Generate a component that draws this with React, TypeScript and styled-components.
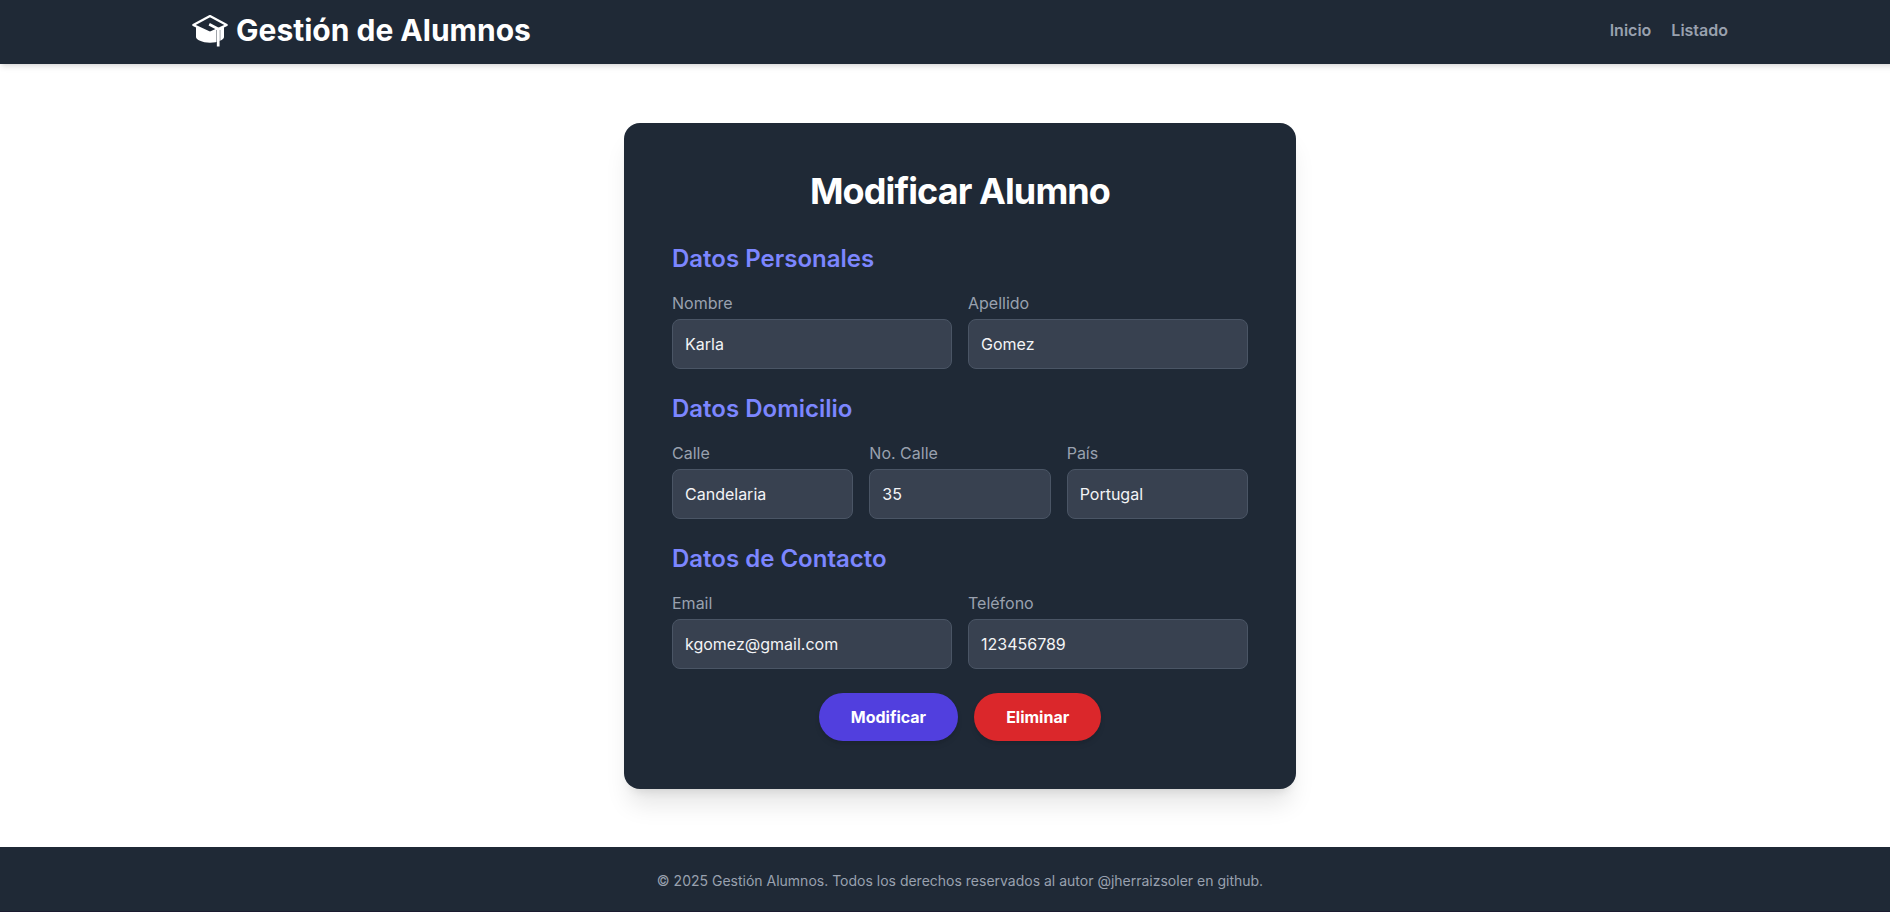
import React from 'react';
import styled, { createGlobalStyle } from 'styled-components';

const GlobalStyle = createGlobalStyle`
  *, *::before, *::after { box-sizing: border-box; }
  html, body { margin: 0; padding: 0; }
  body {
    overflow: hidden;
    background: #ffffff;
    font-family: Inter, sans-serif;
    font-size: 16px;
    line-height: 24px;
  }
`;

const Page = styled.div`
  display: flex;
  flex-direction: column;
  width: 1920px;
  height: 912px;
  border-bottom: 1px solid #1b1b30;
`;

const Header = styled.header`
  flex: none;
  background: #1f2936;
  box-shadow: 0 4px 6px -1px rgba(0, 0, 0, 0.1), 0 2px 4px -2px rgba(0, 0, 0, 0.1);
`;

const HeaderInner = styled.div`
  display: flex;
  align-items: center;
  justify-content: space-between;
  width: 1536px;
  height: 64px;
  margin: 0 auto;
  padding-bottom: 4px;
`;

const Brand = styled.div`
  display: flex;
  align-items: center;
  gap: 8px;
  color: #ffffff;
  font-size: 30px;
  font-weight: 700;
  line-height: 36px;
`;

const Nav = styled.nav`
  display: flex;
  gap: 20px;
`;

const NavLink = styled.a`
  color: #99a1af;
  font-weight: 600;
  text-decoration: none;
`;

const Main = styled.main`
  flex: 1;
  display: flex;
  align-items: center;
  justify-content: center;
`;

const Card = styled.form`
  width: 672px;
  height: 666px;
  padding: 48px;
  border-radius: 16px;
  background: #1f2936;
  box-shadow: 0 20px 25px -5px rgba(0, 0, 0, 0.1), 0 8px 10px -6px rgba(0, 0, 0, 0.1);
`;

const Title = styled.h1`
  margin: 0 0 32px;
  color: #ffffff;
  font-size: 36px;
  font-weight: 700;
  line-height: 40px;
  letter-spacing: -0.9px;
  text-align: center;
`;

const Section = styled.section`
  margin-bottom: 24px;
`;

const SectionTitle = styled.h2`
  margin: 0 0 16px;
  color: #7c86ff;
  font-size: 24px;
  font-weight: 600;
  line-height: 32px;
`;

const Fields = styled.div<{ $columns: number }>`
  display: grid;
  grid-template-columns: repeat(${({ $columns }) => $columns}, minmax(0, 1fr));
  gap: 16px;
`;

const Field = styled.label`
  display: flex;
  flex-direction: column;
  gap: 4px;
  color: #99a1af;
`;

const Input = styled.input`
  width: 100%;
  height: 50px;
  padding: 12px;
  border: 1px solid #4a5565;
  border-radius: 8px;
  outline: none;
  background: #384150;
  color: #f3f4f6;
  font: inherit;
`;

const Actions = styled.div`
  display: flex;
  justify-content: center;
  gap: 16px;
`;

const Button = styled.button<{ $color: string }>`
  height: 48px;
  padding: 12px 32px;
  border: 0;
  border-radius: 24px;
  background: ${({ $color }) => $color};
  box-shadow: 0 4px 6px -1px rgba(0, 0, 0, 0.1), 0 2px 4px -2px rgba(0, 0, 0, 0.1);
  color: #ffffff;
  font: inherit;
  font-weight: 700;
`;

const Footer = styled.footer`
  flex: none;
  display: flex;
  align-items: center;
  justify-content: center;
  height: 64px;
  padding-top: 4px;
  background: #1f2936;
  color: #99a1af;
  font-size: 14px;
  line-height: 20px;
`;

const sections = [
  { title: 'Datos Personales', fields: [['Nombre', 'Karla'], ['Apellido', 'Gomez']] },
  { title: 'Datos Domicilio', fields: [['Calle', 'Candelaria'], ['No. Calle', '35'], ['País', 'Portugal']] },
  { title: 'Datos de Contacto', fields: [['Email', 'kgomez@gmail.com'], ['Teléfono', '123456789']] },
];

function GraduationCap() {
  return (
    <svg width="36" height="34" viewBox="0 0 36 34" fill="none" aria-hidden="true">
      <path d="M4 13h28v11c0 2.500-6 5.700-14 5.700S4 26.500 4 24Z" fill="#ffffff" />
      <path d="M1.300 12 18 3l16.700 9L18 19.800Z" fill="#1f2936" stroke="#ffffff" strokeWidth="2.200" strokeLinejoin="round" />
      <path d="M24.500 17v12.500" stroke="#1f2936" strokeWidth="0.500" />
      <path d="M27.900 17v12.500" stroke="#1f2936" strokeWidth="0.600" />
      <path d="m17.200 11.300 9 4.700v17.600" stroke="#ffffff" strokeWidth="2.700" strokeLinejoin="round" />
    </svg>
  );
}

export default function App() {
  return (
    <>
      <GlobalStyle />
      <Page>
        <Header>
          <HeaderInner>
            <Brand><GraduationCap />Gestión de Alumnos</Brand>
            <Nav>
              <NavLink>Inicio</NavLink>
              <NavLink>Listado</NavLink>
            </Nav>
          </HeaderInner>
        </Header>
        <Main>
          <Card>
            <Title>Modificar Alumno</Title>
            {sections.map(({ title, fields }) => (
              <Section key={title}>
                <SectionTitle>{title}</SectionTitle>
                <Fields $columns={fields.length}>
                  {fields.map(([label, value]) => (
                    <Field key={label}>
                      {label}
                      <Input defaultValue={value} />
                    </Field>
                  ))}
                </Fields>
              </Section>
            ))}
            <Actions>
              <Button type="button" $color="#513fde">Modificar</Button>
              <Button type="button" $color="#db272b">Eliminar</Button>
            </Actions>
          </Card>
        </Main>
        <Footer>© 2025 Gestión Alumnos. Todos los derechos reservados al autor @jherraizsoler en github.</Footer>
      </Page>
    </>
  );
}
